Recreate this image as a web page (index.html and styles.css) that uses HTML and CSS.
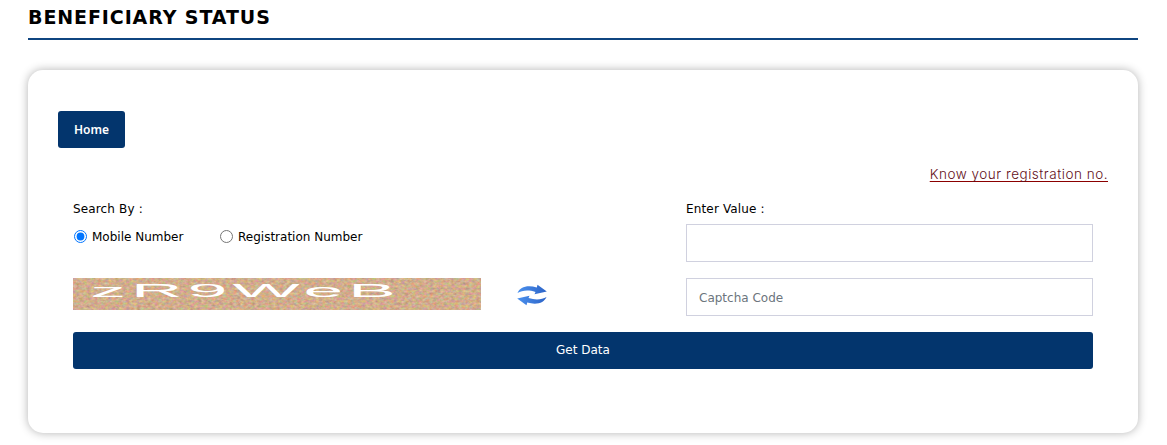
FILE: index.html
```html
<!DOCTYPE html>
<html lang="en">
<head>
<meta charset="utf-8">
<title>Beneficiary Status</title>
<link rel="stylesheet" href="styles.css">
</head>
<body>
<main class="page">
  <h1 class="title"><span>BENEFICIARY STATUS</span></h1>
  <section class="card">
    <a class="btn home">Home</a>
    <div class="know"><a class="know-link">Know your registration no.</a></div>
    <form class="form">
      <div class="search">
        <div class="label">Search By :</div>
        <div class="radios">
          <label class="choice mobile"><input type="radio" name="by" checked><span class="mobile-text">Mobile Number</span></label>
          <label class="choice"><input type="radio" name="by"><span class="reg-text">Registration Number</span></label>
        </div>
      </div>
      <div class="value">
        <div class="label enter">Enter Value :</div>
        <input class="field" type="text">
      </div>
      <div class="captcha">
        <svg class="captcha-image" width="408" height="32" viewBox="0 0 408 32">
          <defs>
            <filter id="grain" x="0" y="0" width="100%" height="100%" color-interpolation-filters="sRGB">
              <feTurbulence type="fractalNoise" baseFrequency="0.28 0.4" numOctaves="2" seed="7"/>
              <feColorMatrix values=".35 0 0 0 .645  0 .35 0 0 .505  0 0 .35 0 .375  0 0 0 0 1"/>
            </filter>
          </defs>
          <rect width="408" height="32" filter="url(#grain)"/>
          <g class="captcha-text" transform="translate(0 19) scale(3.75 1)">
            <text x="4.600" y="0" textLength="81.500" lengthAdjust="spacing">zR9WeB</text>
          </g>
        </svg>
        <svg class="refresh" width="32" height="24" viewBox="0 0 32 24">
          <defs><linearGradient id="blue" x2="1"><stop stop-color="#4b91ee"/><stop offset="1" stop-color="#2d64c7"/></linearGradient></defs>
          <path fill="url(#blue)" d="M1.500 10C4 4 11 1.700 20.800 4.400L21.500 1.800 30.800 8.400 18.500 11.200 19.500 8.900C12 6.700 6 7.400 1.500 10Z"/>
          <path fill="url(#blue)" d="M30.500 14C28 20 21 22.300 11.200 19.600L10.500 22.200 1.200 15.600 13.500 12.800 12.500 15.100C20 17.300 26 16.600 30.500 14Z"/>
        </svg>
      </div>
      <input class="field" type="text" placeholder="Captcha Code">
      <button class="btn submit" type="button">Get Data</button>
    </form>
  </section>
</main>
</body>
</html>
```
FILE: styles.css
```css
* { box-sizing: border-box; }
body {
  margin: 0;
  background: #fff;
  color: #000;
  font: 12px/18px Verdana, "DejaVu Sans", sans-serif;
}
.page {
  height: 445px;
  padding: 0 29px 0 28px;
}
.title {
  height: 40px;
  margin: 0 0 30px;
  padding-top: 5px;
  border-bottom: 2px solid #0f4580;
  font-size: 19px;
  line-height: 25px;
  letter-spacing: .9px;
}
.card {
  height: 363px;
  padding: 41px 30px 0;
  border-radius: 15px;
  box-shadow: 0 0 10px rgba(0, 0, 0, .3);
}
.btn {
  display: flex;
  align-items: center;
  justify-content: center;
  height: 37px;
  padding: 0 0 2px;
  border: 0;
  border-radius: 3px;
  background: #03356d;
  color: #fff;
  font: 12px/18px Verdana, "DejaVu Sans", sans-serif;
}
.home {
  width: 67px;
  padding: 0;
  font: 600 12px/18px "Noto Sans", sans-serif;
}
.know {
  height: 52px;
  padding-top: 16px;
  text-align: right;
}
.know-link {
  color: #64101a;
  font: 300 13.5px/20px Inter, sans-serif;
  letter-spacing: .52px;
  text-decoration: underline #8b0000 1px;
  text-decoration-skip-ink: none;
  text-underline-offset: 2px;
}
.form {
  display: grid;
  grid-template-columns: 408px 407px;
  grid-template-rows: 62px 38px 37px;
  justify-content: space-between;
  row-gap: 16px;
  padding: 0 15px;
}
.label { height: 24px; letter-spacing: .15px; }
.radios { display: flex; padding-top: 4px; }
.choice { display: flex; width: 146px; white-space: nowrap; }
.choice input { width: 13px; height: 13px; margin: 2px 5px 0 1px; }
.field {
  display: block;
  width: 407px;
  height: 38px;
  padding: 1px 12px 0;
  border: 1px solid #d0d1df;
  background: #fff;
  font: 12px/18px Verdana, "DejaVu Sans", sans-serif;
}
.field::placeholder { color: #6c757d; opacity: 1; }
.captcha { display: flex; gap: 35px; }
.captcha-image { flex: none; }
.captcha-text {
  fill: #fff;
  font: 19px "Liberation Sans", sans-serif;
}
.refresh { flex: none; margin-top: 5px; }
.submit { grid-column: 1 / -1; width: 100%; }
```
